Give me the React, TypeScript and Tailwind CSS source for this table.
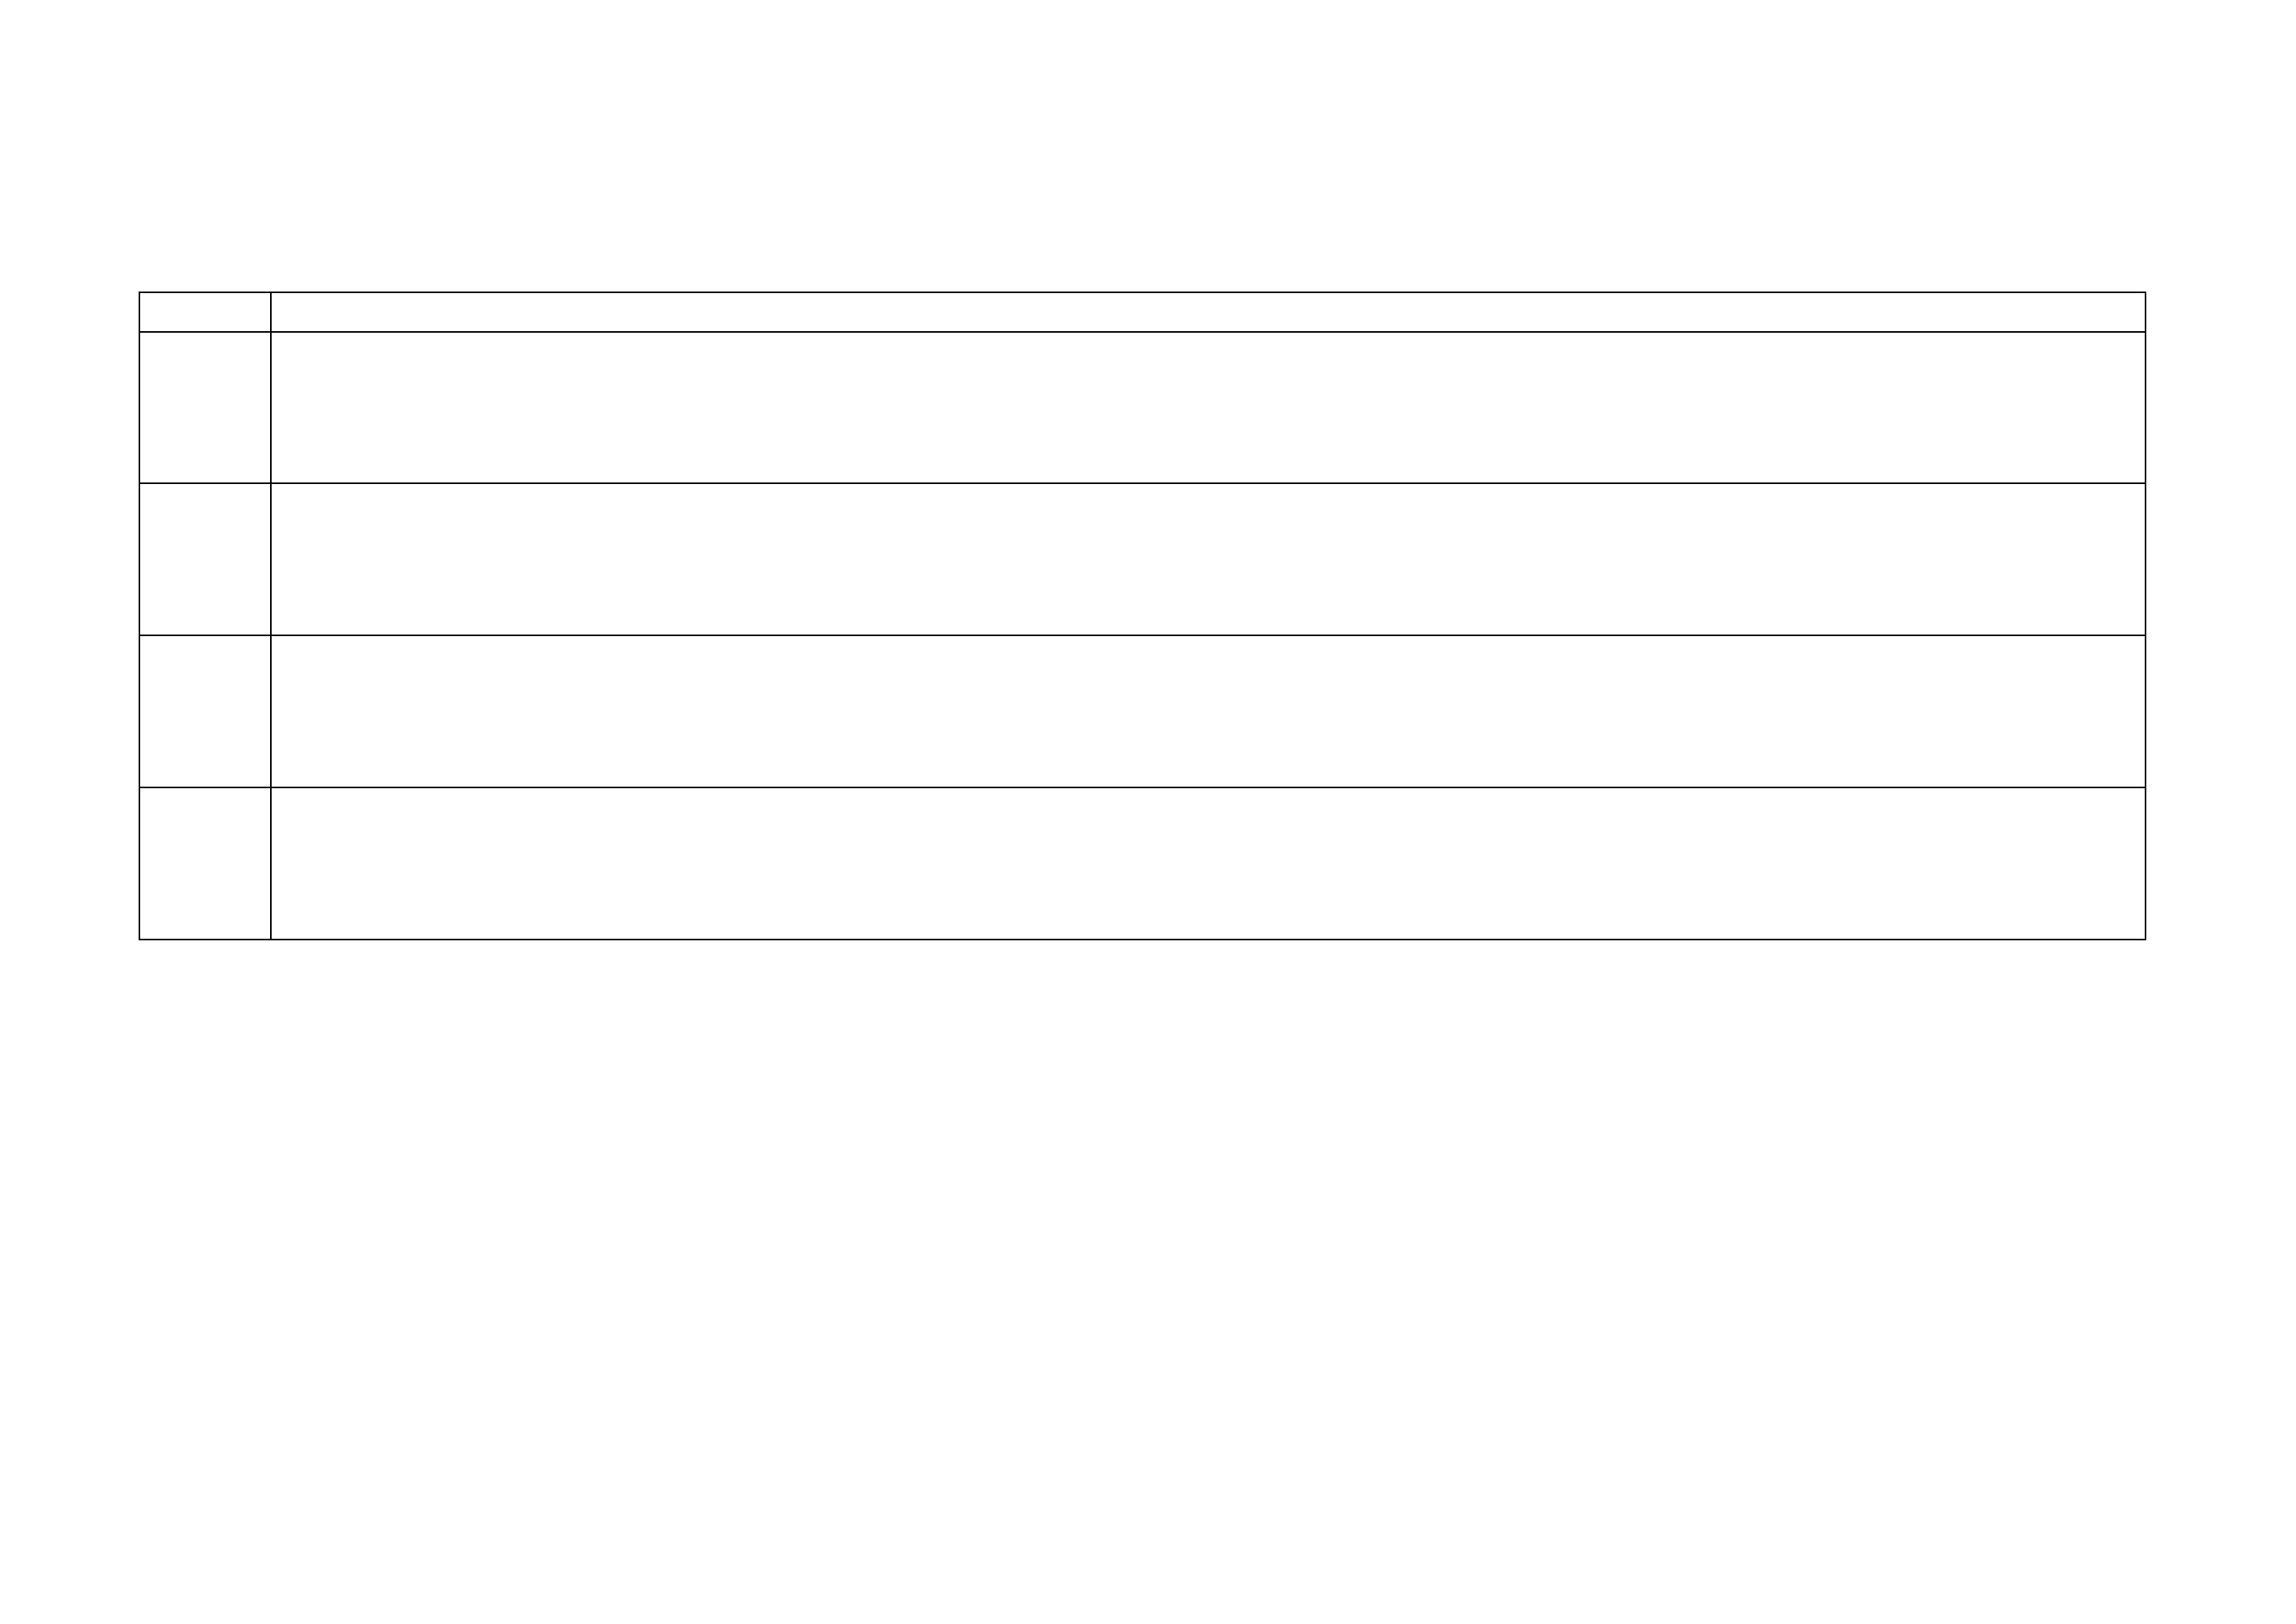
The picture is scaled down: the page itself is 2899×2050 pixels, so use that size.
const rows = [191, 192, 192, 192];

const App = () => {
  return (
    <div className="min-h-[2050px] w-[2899px] bg-white pt-[368px] pl-[175px] font-['Liberation_Sans',sans-serif]">
      <table className="w-[2535px] table-fixed border-collapse">
        <colgroup>
          <col className="w-[166px]" />
          <col />
        </colgroup>
        <thead>
          <tr className="h-[50px]">
            <th className="border-2 border-black p-0" />
            <th className="border-2 border-black p-0" />
          </tr>
        </thead>
        <tbody>
          {rows.map((h, i) => (
            <tr key={i} style={{ height: h }}>
              <td className="border-2 border-black p-0" />
              <td className="border-2 border-black p-0" />
            </tr>
          ))}
        </tbody>
      </table>
    </div>
  );
};

export default App;
